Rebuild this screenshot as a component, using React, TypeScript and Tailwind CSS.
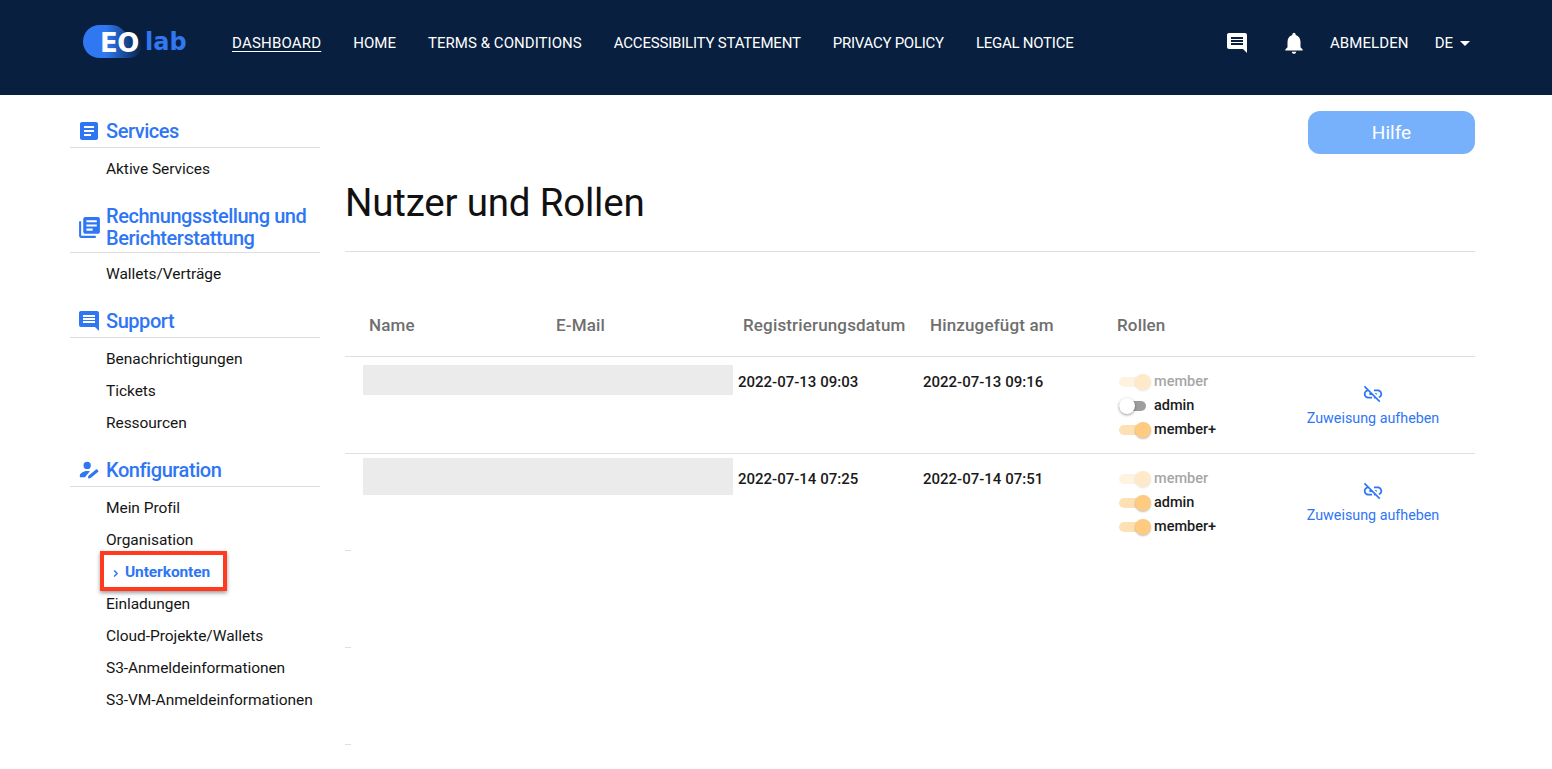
import React from "react";

const F = "font-['Roboto',sans-serif]";

function Ic({ d, className, flip }: { d: string; className?: string; flip?: boolean }) {
  return (
    <svg viewBox="0 0 24 24" className={className} fill="currentColor">
      <path d={d} transform={flip ? "matrix(-1 0 0 1 24 0)" : undefined} />
    </svg>
  );
}
const ARTICLE = "M19 3H5c-1.1 0-2 .9-2 2v14c0 1.1.9 2 2 2h14c1.1 0 2-.9 2-2V5c0-1.1-.9-2-2-2zm-5 14H7v-2h7v2zm3-4H7v-2h10v2zm0-4H7V7h10v2z";
const BOOKS = "M4 6H2v14c0 1.1.9 2 2 2h14v-2H4V6zm16-4H8c-1.1 0-2 .9-2 2v12c0 1.1.9 2 2 2h12c1.1 0 2-.9 2-2V4c0-1.1-.9-2-2-2zm-1 9H9V9h10v2zm-4 4H9v-2h6v2zm4-8H9V5h10v2z";
const MSG = "M20 2H4c-1.1 0-1.99.9-1.99 2L2 22l4-4h14c1.1 0 2-.9 2-2V4c0-1.1-.9-2-2-2zm-2 12H6v-2h12v2zm0-3H6V9h12v2zm0-3H6V6h12v2z";
const BELL = "M12 22c1.1 0 2-.9 2-2h-4c0 1.1.89 2 2 2zm6-6v-5c0-3.07-1.64-5.64-4.5-6.32V4c0-.83-.67-1.5-1.5-1.5s-1.5.67-1.5 1.5v.68C7.63 5.36 6 7.92 6 11v5l-2 2v1h16v-1l-2-2z";
const LINKOFF = "M17 7h-4v1.9h4c1.71 0 3.1 1.39 3.1 3.1 0 1.43-.98 2.63-2.31 2.98l1.46 1.46C20.88 15.61 22 13.95 22 12c0-2.76-2.24-5-5-5zm-1 4h-2.19l2 2H16zM2 4.27l3.11 3.11C3.29 8.12 2 9.91 2 12c0 2.76 2.24 5 5 5h4v-1.9H7c-1.71 0-3.1-1.39-3.1-3.1 0-1.59 1.21-2.9 2.76-3.07L8.73 11H8v2h2.73L13 15.27V17h1.73l4.01 4L20 19.74 3.27 3 2 4.27z";
const PERSON = "M10 3a4 4 0 1 1 0 8 4 4 0 0 1 0-8zM2 20v-2c0-3 5-5 8-5 1 0 2 .1 3 .4L7.5 20H2zM20.7 11.3l1.4 1.4c.3.3.3.8 0 1.1l-8.3 6.9-3 .5.6-2.9 8.2-6.9c.3-.3.8-.3 1.1-.1z";

function Logo() {
  return (
    <div className="relative w-[105px] h-[33px]">
      <svg viewBox="0 0 60 33" className="absolute left-0 top-0 w-[60px] h-[33px]">
        <defs>
          <linearGradient id="lg" x1="0" x2="1" y1="0" y2="0">
            <stop offset="0.4" stopColor="#2f78f2" />
            <stop offset="0.95" stopColor="#0c2a58" />
          </linearGradient>
        </defs>
        <path d="M16.500 33A16.500 16.500 0 0 1 16.500 0H28C36 0 41 5 44 10C54 10 58 16 58 22C58 29 52 33 46 33Z" fill="url(#lg)" />
      </svg>
      <span className="absolute left-[17px] top-[3px] text-white font-['DejaVu_Sans',sans-serif] font-bold text-[26px] leading-[30px] tracking-[-0.5px]">EO</span>
      <span className="absolute left-[62px] top-[2px] text-[#2f78f2] font-['DejaVu_Sans',sans-serif] font-bold text-[24px] leading-[30px]">lab</span>
    </div>
  );
}

function SideHead({ icon, children, pb }: { icon: React.ReactNode; children: React.ReactNode; pb?: string }) {
  return (
    <div className={"flex items-center border-b border-[#dedede] " + (pb ?? "pb-[3px]")}>
      <div className="w-[36px] pl-[2px] flex justify-center">{icon}</div>
      <div className="text-[#2f76f5] text-[20px] leading-[22px] font-medium tracking-[-0.45px]">{children}</div>
    </div>
  );
}

function SideItem({ children }: { children: React.ReactNode }) {
  return (
    <div className="h-[32px] pl-[36px] flex items-center text-[15.500px] text-[#151515] tracking-[-0.05px] whitespace-nowrap">{children}</div>
  );
}

function Sidebar() {
  return (
    <aside className="w-[250px] ml-[70px] pt-[24px] shrink-0">
      <SideHead pb="pb-[4px]" icon={<Ic d={ARTICLE} className="w-[24px] h-[24px] text-[#2f76f5]" />}>Services</SideHead>
      <div className="pt-[6px]"><SideItem>Aktive Services</SideItem></div>
      <div className="mt-[19px]">
        <SideHead icon={<Ic d={BOOKS} className="w-[25px] h-[25px] text-[#2f76f5]" />}>
          Rechnungsstellung und<br />Berichterstattung
        </SideHead>
      </div>
      <div className="pt-[6px]"><SideItem>Wallets/Verträge</SideItem></div>
      <div className="mt-[18px]">
        <SideHead pb="pb-[4px]" icon={<Ic d={MSG} flip className="w-[24px] h-[24px] text-[#2f76f5]" />}>Support</SideHead>
      </div>
      <div className="pt-[6px]">
        <SideItem>Benachrichtigungen</SideItem>
        <SideItem>Tickets</SideItem>
        <SideItem>Ressourcen</SideItem>
      </div>
      <div className="mt-[19px]">
        <SideHead pb="pb-[5px]" icon={<Ic d={PERSON} className="w-[22px] h-[22px] text-[#2f76f5]" />}>Konfiguration</SideHead>
      </div>
      <div className="pt-[6px] relative">
        <SideItem>Mein Profil</SideItem>
        <SideItem>Organisation</SideItem>
        <div className="h-[32px] pl-[43px] flex items-center gap-[6px] text-[15.500px] font-bold text-[#2f76f5] relative tracking-[-0.1px]">
          <svg viewBox="0 0 8 10" className="w-[6px] h-[9px]" fill="none" stroke="currentColor" strokeWidth="2"><path d="M1.500 1l4 4-4 4" /></svg>
          <span>Unterkonten</span>
          <div className="absolute left-[30px] top-[-6px] w-[127px] h-[40px] border-[4px] border-[#ff3a1e] shadow-[0_2px_4px_rgba(0,0,0,0.4)]" />
        </div>
        <SideItem>Einladungen</SideItem>
        <SideItem>Cloud-Projekte/Wallets</SideItem>
        <SideItem>S3-Anmeldeinformationen</SideItem>
        <SideItem>S3-VM-Anmeldeinformationen</SideItem>
      </div>
    </aside>
  );
}

function Toggle({ label, on, dim }: { label: string; on?: boolean; dim?: boolean }) {
  return (
    <div className={"h-[24px] flex items-center " + (dim ? "opacity-40" : "")}>
      <div className="relative w-[32px] h-[10px] ml-[2px]">
        <div className={"absolute left-0 top-0 w-[27px] h-[10px] rounded-full " + (on ? "bg-[#fde0b3]" : "bg-[#9e9e9e]")} />
        {on ? (
          <div className="absolute right-0 top-[-3px] w-[16px] h-[16px] rounded-full bg-[#fecb80] shadow-[0_1px_2px_rgba(0,0,0,0.25)]" />
        ) : (
          <div className="absolute left-0 top-[-3px] w-[16px] h-[16px] rounded-full bg-white shadow-[0_1px_3px_rgba(0,0,0,0.4)]" />
        )}
      </div>
      <span className="ml-[3px] text-[14.500px] font-medium text-[#1c1c1c]">{label}</span>
    </div>
  );
}

function Row({ d1, d2, adminOn, blockH, blockTop, line }: { d1: string; d2: string; adminOn: boolean; blockH: string; blockTop: string; line?: boolean }) {
  return (
    <div className={"flex items-start " + (line ? "h-[97px] border-b border-[#dfdfdf]" : "h-[96px]")}>
      <div className={"ml-[18px] w-[370px] bg-[#ebebeb] shrink-0 " + blockH + " " + blockTop} />
      <div className="ml-[5px] w-[185px] pt-[16px] text-[15px] font-medium leading-[18px] text-[#1a1a1a] whitespace-nowrap">{d1}</div>
      <div className="w-[194px] pt-[16px] text-[15px] font-medium leading-[18px] text-[#1a1a1a] whitespace-nowrap">{d2}</div>
      <div className="w-[190px] pt-[13px]">
        <Toggle label="member" on dim />
        <Toggle label="admin" on={adminOn} />
        <Toggle label="member+" on />
      </div>
      <div className="w-[132px] pt-[26px] flex flex-col items-center text-[#2f76f5]">
        <Ic d={LINKOFF} className="w-[22px] h-[22px]" />
        <span className="text-[14.300px] mt-[3px] leading-[20px] whitespace-nowrap">Zuweisung aufheben</span>
      </div>
    </div>
  );
}

export default function App() {
  return (
    <div className={"min-h-[769px] bg-white overflow-hidden " + F}>
      <header className="h-[95px] bg-[#081f3f] flex text-white text-[15px]">
        <div className="ml-[83px] mt-[25px]"><Logo /></div>
        <nav className="ml-[44px] flex gap-[32px] h-[86px] items-center whitespace-nowrap">
          <span className="underline underline-offset-[3px] tracking-[0.2px]">DASHBOARD</span>
          <span>HOME</span>
          <span className="tracking-[0.05px]">TERMS &amp; CONDITIONS</span>
          <span className="tracking-[-0.2px]">ACCESSIBILITY STATEMENT</span>
          <span className="tracking-[-0.25px]">PRIVACY POLICY</span>
          <span className="tracking-[-0.25px]">LEGAL NOTICE</span>
        </nav>
        <div className="ml-auto mr-[82px] flex items-center h-[86px]">
          <Ic d={MSG} flip className="w-[24px] h-[24px]" />
          <Ic d={BELL} className="w-[26px] h-[26px] ml-[32px]" />
          <span className="ml-[23px] tracking-[0.1px]">ABMELDEN</span>
          <span className="ml-[26px]">DE</span>
          <span className="ml-[7px] w-0 h-0 border-x-[5px] border-x-transparent border-t-[5px] border-t-white" />
        </div>
      </header>
      <div className="flex">
        <Sidebar />
        <main className="ml-[25px] w-[1130px] shrink-0">
          <div className="flex justify-end pt-[16px]">
            <button className="w-[167px] h-[43px] pt-[1px] rounded-[12px] bg-[#78b1fb] text-white text-[19px]">Hilfe</button>
          </div>
          <h1 className="mt-[24px] text-[38.500px] leading-[50px] font-normal text-[#111] pb-[23px] border-b border-[#dedede] tracking-[-0.2px]">Nutzer und Rollen</h1>
          <div className="mt-[43px] h-[62px] border-b border-[#dfdfdf] flex text-[17px] font-medium text-[#6f6f6f] pl-[24px] pt-[20px] leading-[20px] tracking-[0.15px]">
            <span className="w-[187px]">Name</span>
            <span className="w-[187px]">E-Mail</span>
            <span className="w-[187px] whitespace-nowrap">Registrierungsdatum</span>
            <span className="w-[187px]">Hinzugefügt am</span>
            <span>Rollen</span>
          </div>
          <Row line d1="2022-07-13 09:03" d2="2022-07-13 09:16" adminOn={false} blockH="h-[30px]" blockTop="mt-[8px]" />
          <Row d1="2022-07-14 07:25" d2="2022-07-14 07:51" adminOn blockH="h-[37px]" blockTop="mt-[4px]" />
          <div className="w-[6px] h-px bg-[#dfdfdf]" />
          <div className="h-[96px]" />
          <div className="w-[6px] h-px bg-[#dfdfdf]" />
          <div className="h-[96px]" />
          <div className="w-[6px] h-px bg-[#dfdfdf]" />
        </main>
      </div>
    </div>
  );
}
